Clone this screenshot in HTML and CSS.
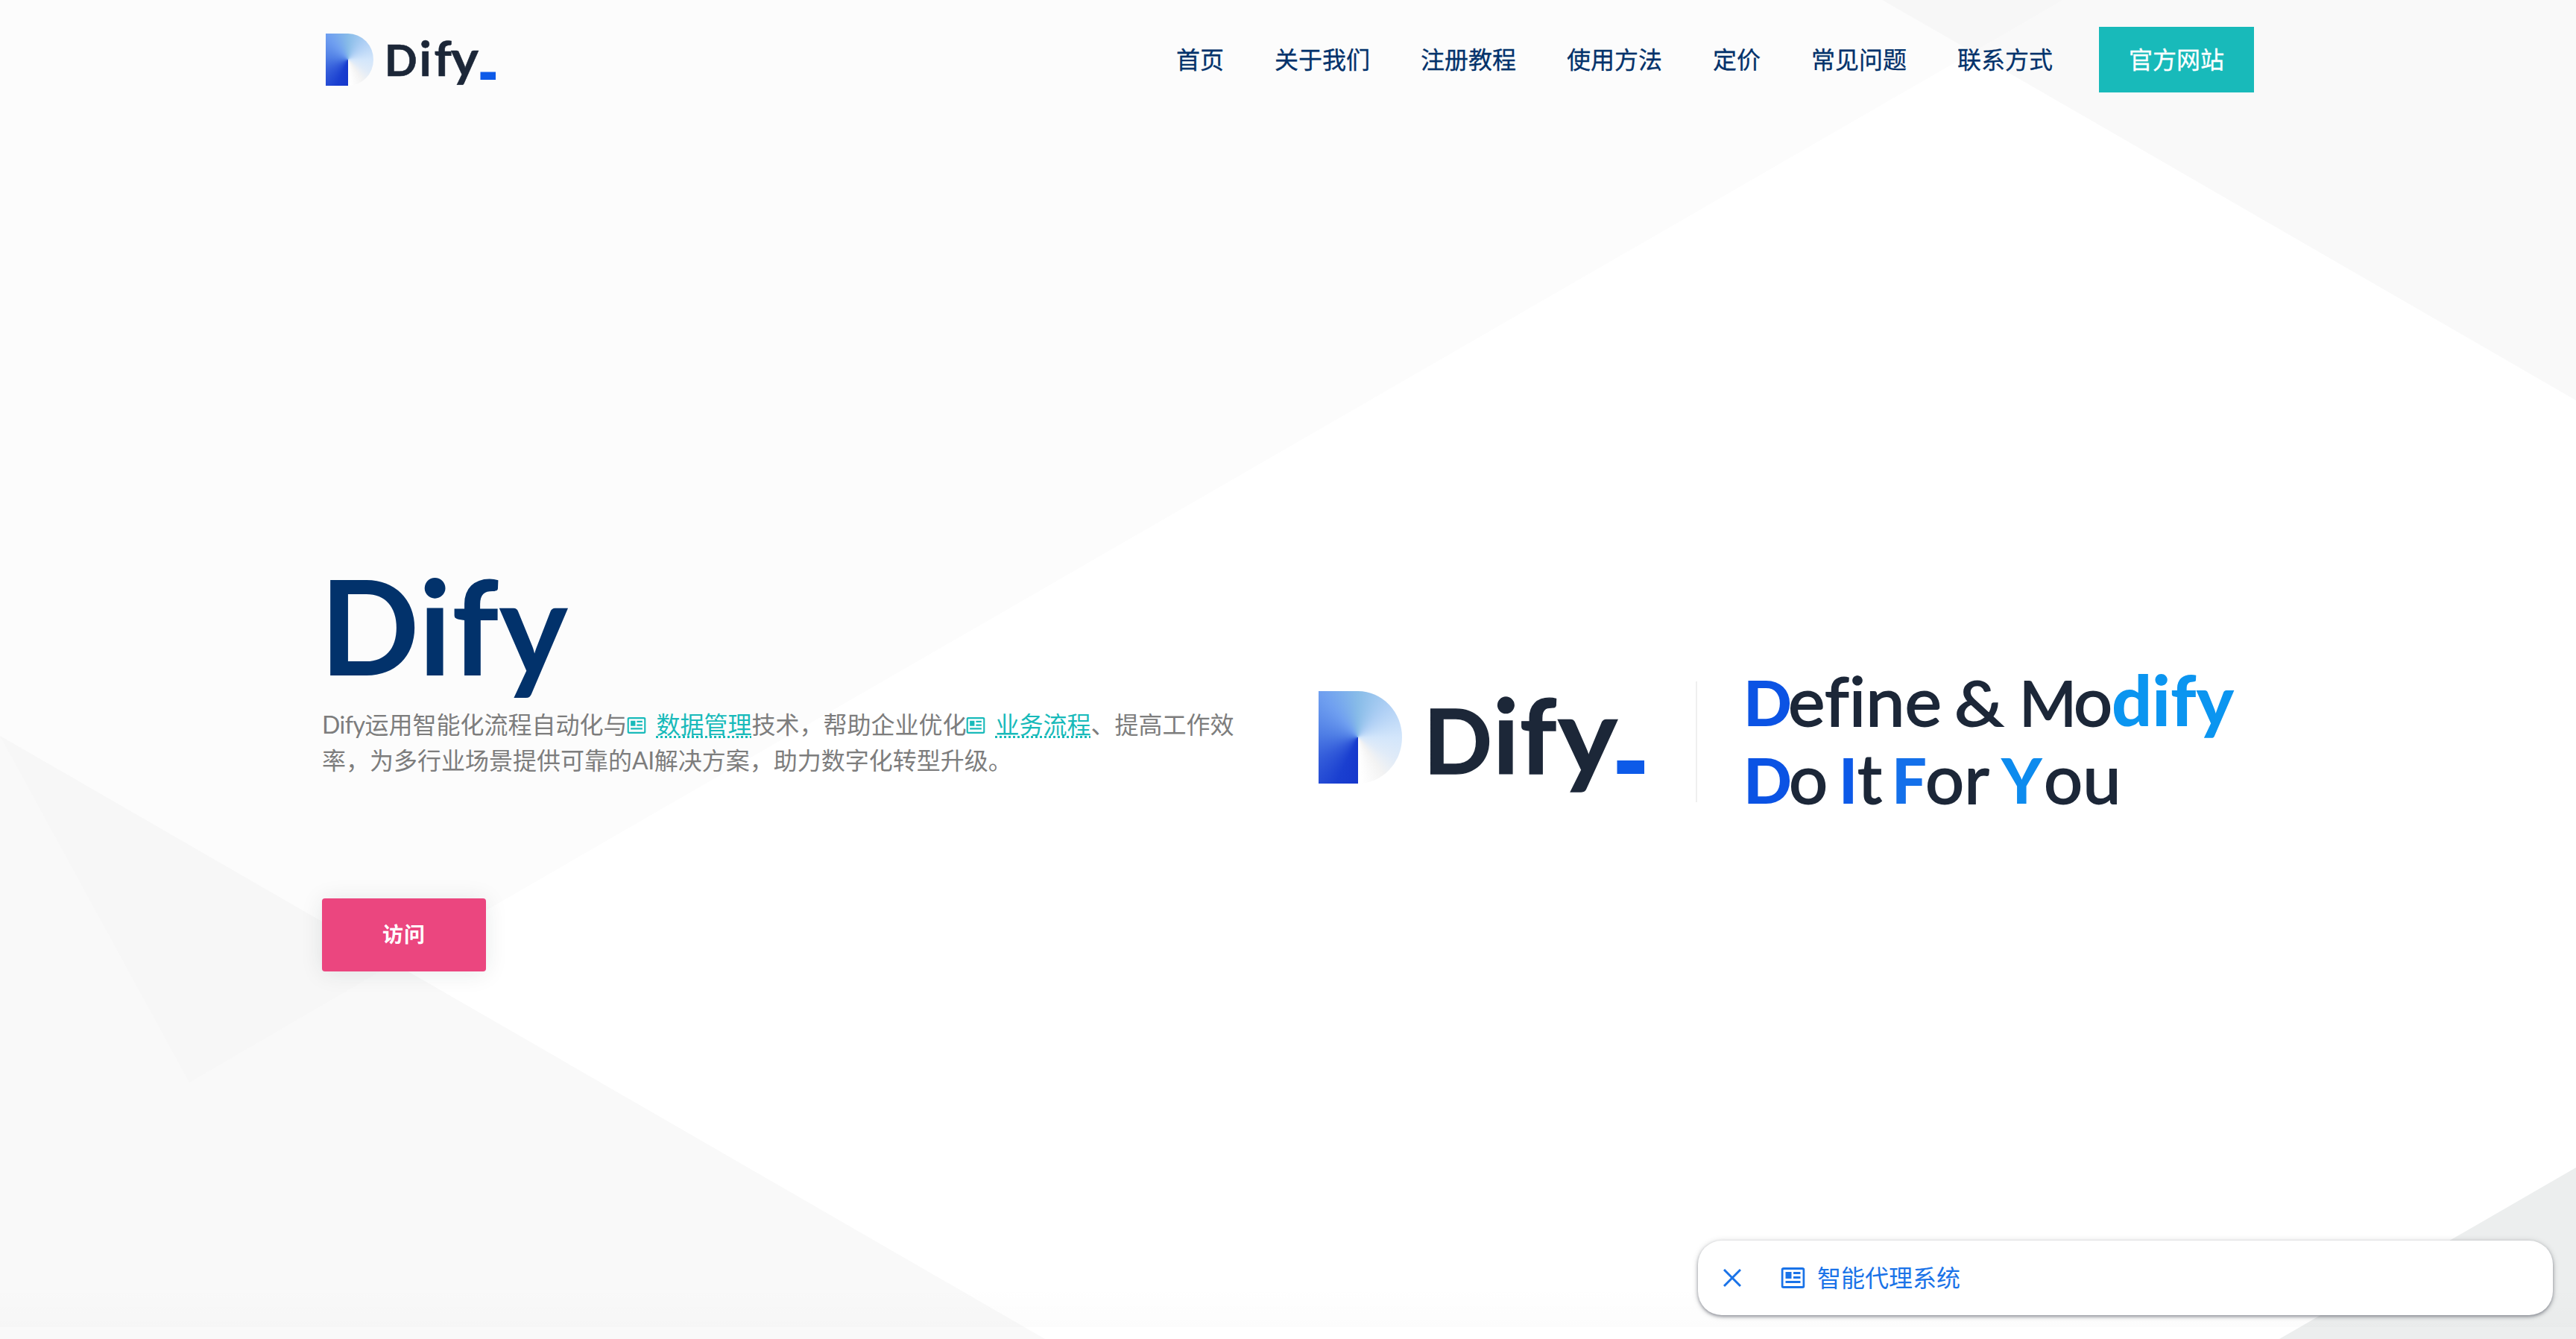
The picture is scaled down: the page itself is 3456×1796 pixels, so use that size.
FILE: index.html
```html
<!DOCTYPE html>
<html lang="zh-CN">
<head>
    <meta charset="UTF-8">
    <meta name="viewport" content="width=device-width, initial-scale=1.0">
    <title>Dify</title>
    <link rel="stylesheet" href="styles.css">
</head>
<body>
    <!-- Background shapes -->
    <svg class="backdrop" viewBox="0 0 3456 1796" preserveAspectRatio="none" aria-hidden="true">
        <polygon points="0,0 2525,0 2647,70 529,1292 0,987" fill="#fcfcfc"/>
        <polygon points="2768,0 3456,0 3456,537 2647,70" fill="#f9f9f9"/>
        <polygon points="2525,0 2768,0 2647,70" fill="#f7f7f7"/>
        <polygon points="0,987 1402,1796 0,1796" fill="#f9f9f9"/>
        <polygon points="0,987 529,1292 254,1452" fill="#f7f7f7"/>
        <polygon points="3456,1566 3456,1796 3058,1796" fill="#eceeee"/>
    </svg>
    <div class="bottom-shade"></div>

    <header class="navbar">
        <a class="brand" href="#">
            <span class="mark"></span>
            <svg class="brand-name" width="160" height="90" viewBox="-10 -5 160 90">
                <g font-weight="700">
                    <text x="-5" y="61.5" font-size="57.5">D</text>
                    <text x="41.5" y="61.5" font-size="65">i</text>
                    <text x="61.5" y="61.5" font-size="65">f</text>
                    <text x="84" y="61.5" font-size="67" textLength="37" lengthAdjust="spacingAndGlyphs">y</text>
                </g>
                <rect x="123.5" y="56.5" width="20.5" height="10.5" fill="#0d5ae8"/>
            </svg>
        </a>
        <nav class="menu">
            <a href="#">首页</a>
            <a href="#">关于我们</a>
            <a href="#">注册教程</a>
            <a href="#">使用方法</a>
            <a href="#">定价</a>
            <a href="#">常见问题</a>
            <a href="#">联系方式</a>
            <a class="official" href="#">官方网站</a>
        </nav>
    </header>

    <main class="hero">
        <div class="intro">
            <h1>Dify</h1>
            <p><span class="latin">Dify</span>运用智能化流程自动化与<a class="term" href="#"><svg class="news" viewBox="0 0 32 28"><use href="#news"/></svg><span>数据管理</span></a>技术，帮助企业优化<a class="term" href="#"><svg class="news" viewBox="0 0 32 28"><use href="#news"/></svg><span>业务流程</span></a>、提高工作效率，为多行业场景提供可靠的<span class="latin">AI</span>解决方案，助力数字化转型升级。</p>
            <a class="visit" href="#">访问</a>
        </div>
        <div class="banner">
            <span class="mark mark-large"></span>
            <svg class="banner-name" width="310" height="200" viewBox="-10 -10 310 200">
                <g font-weight="700">
                    <text x="0" y="128" font-size="121">D</text>
                    <text x="93" y="128" font-size="137">i</text>
                    <text x="129" y="128" font-size="137">f</text>
                    <text x="180" y="128" font-size="141" textLength="80" lengthAdjust="spacingAndGlyphs">y</text>
                </g>
                <rect x="259.5" y="110" width="36.5" height="18" fill="#0d5ae8"/>
            </svg>
            <span class="divider"></span>
            <svg class="slogan" width="690" height="220" viewBox="-10 -10 690 220">
                <g font-weight="900">
                    <text x="-4" y="83.5" font-size="83" fill="#0b53e4" textLength="65" lengthAdjust="spacingAndGlyphs">D</text>
                    <text x="490" y="83.5" font-size="93" fill="#0b95f0" textLength="164" lengthAdjust="spacingAndGlyphs">dify</text>
                    <text x="-4" y="187.5" font-size="83" fill="#0b53e4" textLength="65" lengthAdjust="spacingAndGlyphs">D</text>
                    <text x="124" y="187.5" font-size="83" fill="#0d5ae8">I</text>
                    <text x="195" y="187.5" font-size="83" fill="#1470ea">F</text>
                    <text x="342" y="187.5" font-size="83" fill="#0d8bee">Y</text>
                </g>
                <g class="slogan-plain">
                    <text x="56" y="83.5" font-size="92" textLength="206" lengthAdjust="spacingAndGlyphs">efine</text>
                    <text x="279" y="83.5" font-size="83" textLength="66" lengthAdjust="spacingAndGlyphs">&amp;</text>
                    <text x="366" y="83.5" font-size="83">M</text>
                    <text x="439" y="83.5" font-size="92">o</text>
                    <text x="57" y="187.5" font-size="92">o</text>
                    <text x="149" y="187.5" font-size="92">t</text>
                    <text x="240" y="187.5" font-size="92">or</text>
                    <text x="399" y="187.5" font-size="92">ou</text>
                </g>
            </svg>
        </div>
    </main>

    <aside class="notice">
        <svg class="close" viewBox="0 0 24 24"><path d="M1 1 23 23M23 1 1 23"/></svg>
        <svg class="news" viewBox="0 0 32 28"><use href="#news"/></svg>
        <a href="#">智能代理系统</a>
    </aside>

    <svg width="0" height="0" class="defs">
        <symbol id="news" viewBox="0 0 32 28">
            <rect x="1.5" y="1.5" width="29" height="25" rx="2" fill="none" stroke="currentColor" stroke-width="3"/>
            <path d="M6 6h8v9H6zM16.5 6H26v3h-9.500zM16.5 12H26v3h-9.500zM6 18h20v3H6z" fill="currentColor"/>
        </symbol>
    </svg>
</body>
</html>
```
FILE: styles.css
```css
* {
    box-sizing: border-box;
}

body {
    margin: 0;
    height: 1796px;
    overflow: hidden;
    background: #fff;
    color: #7d7d7d;
    font-family: "Noto Sans CJK SC", sans-serif;
    font-size: 32px;
    line-height: 48px;
}

a {
    color: inherit;
    text-decoration: none;
}

svg text,
.latin {
    font-family: Lato, sans-serif;
    font-variant-ligatures: none;
}

.latin {
    letter-spacing: -0.5px;
    line-height: 1;
}

/* Background */
.backdrop {
    position: absolute;
    top: 0;
    left: 0;
    z-index: -2;
    width: 100%;
    height: 1796px;
}

.bottom-shade {
    position: absolute;
    top: 1724px;
    left: 0;
    z-index: -1;
    width: 100%;
    height: 56px;
    background: linear-gradient(rgba(0, 0, 0, 0), rgba(0, 0, 0, 0.012));
}

.defs {
    position: absolute;
}

/* Header */
.navbar {
    display: flex;
    justify-content: space-between;
    align-items: center;
    width: 2592px;
    height: 160px;
    margin: 0 auto;
}

.brand {
    display: flex;
    align-items: center;
    gap: 10px;
    padding-left: 5px;
}

.brand-name,
.banner-name {
    fill: #1c2738;
}

.brand-name text {
    stroke: #1c2738;
    stroke-width: 0.6px;
}

.banner-name text {
    stroke: #1c2738;
    stroke-width: 1.4px;
}

.mark {
    width: 64px;
    height: 70px;
    border-radius: 0 34px 34px 0 / 0 35px 35px 0;
    background: conic-gradient(from 180deg at 47% 50%, #1638cc 0deg, #1a3fd0 25deg, #335cda 60deg, #4f7ee5 95deg, #6f9ff0 140deg, #88bce8 180deg, #b0d0f5 225deg, #d3e6fb 270deg, #e0ebf8 300deg, #f3f3f3 325deg, #fff 355deg);
}

.menu {
    display: flex;
    align-items: center;
    gap: 68px;
    color: #02326b;
    -webkit-text-stroke: 0.3px;
}

.menu a {
    padding-bottom: 4px;
}

.menu .official {
    margin-left: -6px;
    padding: 18px 40px 22px;
    background: #18baba;
    color: #fff;
}

/* Hero */
.hero {
    display: flex;
    justify-content: space-between;
    width: 2592px;
    margin: 0 auto;
}

.intro {
    width: 1240px;
    padding-top: 578px;
}

h1 {
    margin: 0 0 8px -3px;
    color: #02326b;
    font-family: Lato, sans-serif;
    font-size: 176px;
    font-weight: 700;
    line-height: 200px;
}

.intro p {
    margin: 0 0 163px;
}

.term {
    color: #18baba;
}

.term .news {
    width: 26px;
    height: 22px;
    margin: 0 13px 0 0;
}

.term span {
    text-decoration: underline dotted 3px;
    text-underline-offset: 3px;
    text-decoration-skip-ink: none;
}

.visit {
    display: block;
    width: 220px;
    height: 98px;
    border-radius: 4px;
    background: #eb467f;
    box-shadow: 0 2px 30px rgba(20, 50, 50, 0.1);
    color: #fff;
    font-size: 28px;
    font-weight: 700;
    letter-spacing: 1px;
    line-height: 95px;
    text-align: center;
}

.banner {
    display: flex;
    align-items: flex-start;
    width: 1255px;
    padding-top: 720px;
}

.mark-large {
    flex: none;
    width: 112px;
    height: 124px;
    margin-top: 47px;
    border-radius: 0 59px 59px 0 / 0 62px 62px 0;
}

.banner-name {
    flex: none;
    margin: 20px 0 0 19px;
}

.divider {
    flex: none;
    width: 2px;
    height: 162px;
    margin: 34px 56px 0 65px;
    background: #efefef;
}

.slogan {
    flex: none;
}

.slogan-plain {
    fill: #1c2738;
    stroke: #1c2738;
    stroke-width: 1.8px;
}

/* Floating notice */
.notice {
    position: absolute;
    top: 1664px;
    left: 2278px;
    display: flex;
    align-items: center;
    width: 1147px;
    height: 100px;
    padding-left: 34px;
    border-radius: 32px;
    background: #fff;
    box-shadow: 0 2px 4px rgba(60, 64, 80, 0.5), 0 1px 8px rgba(60, 64, 67, 0.2);
    color: #1a73e8;
}

.notice a {
    padding-bottom: 4px;
}

.close {
    width: 24px;
    height: 24px;
    fill: none;
    stroke: currentColor;
    stroke-width: 3;
}

.notice .news {
    width: 33px;
    height: 28px;
    margin: 0 16px 0 53px;
}
```
